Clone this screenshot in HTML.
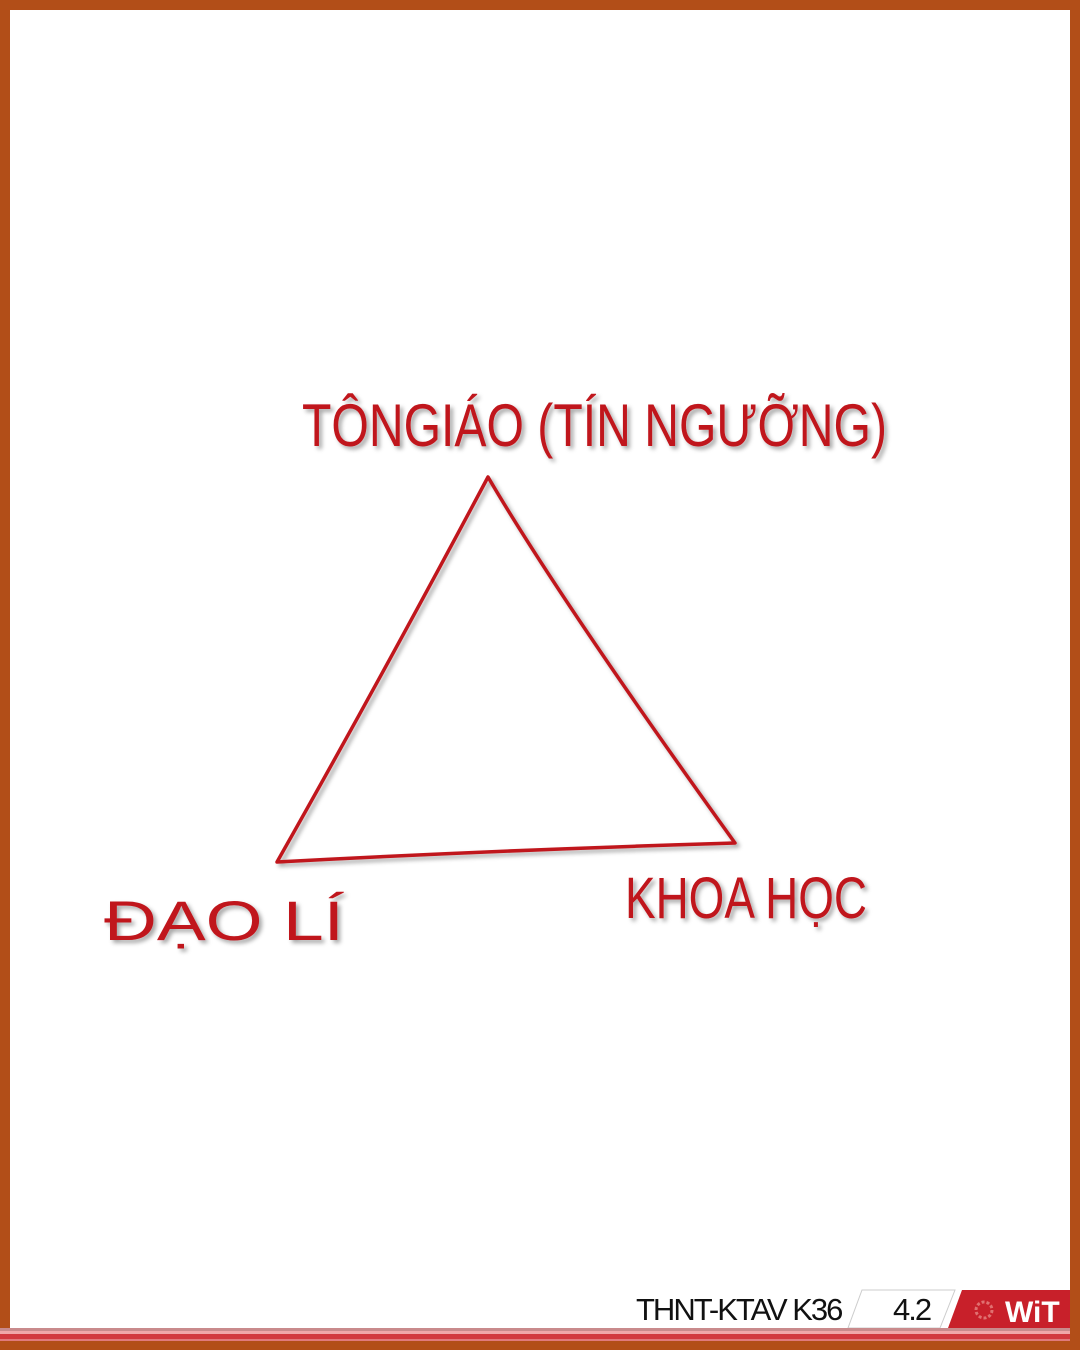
<!DOCTYPE html>
<html><head><meta charset="utf-8"><style>
html,body{margin:0;padding:0}
body{width:1080px;height:1350px;position:relative;background:#b24e18;overflow:hidden;font-family:"Liberation Sans",sans-serif}
.in{position:absolute;left:10px;top:10px;width:1060px;height:1330px;background:#fff}
.l{position:absolute;left:0;width:1070px}
.foot{position:absolute;top:1292px;font-size:31px;color:#111;letter-spacing:-2px}
</style></head><body>
<div class="in"></div>
<svg width="1080" height="1350" style="position:absolute;left:0;top:0">
<defs><filter id="sh"><feDropShadow dx="3" dy="3" stdDeviation="2" flood-color="#000" flood-opacity="0.35"/></filter></defs>
<g filter="url(#sh)" fill="none" stroke="#c0141c" stroke-width="3.5" stroke-linejoin="round">
<path d="M488 477 Q560 600 735 843 Q500 850 277 862 Q380 680 488 477 Z"/>
</g>
<g filter="url(#sh)" fill="#c0141c" font-family="Liberation Sans Narrow, Liberation Sans, sans-serif">
<text x="302" y="446" font-size="60" textLength="585" lengthAdjust="spacingAndGlyphs">TÔNGIÁO (TÍN NGƯỠNG)</text>
<text x="104" y="940" font-size="56" textLength="240" lengthAdjust="spacingAndGlyphs">ĐẠO LÍ</text>
<text x="625" y="918" font-size="58" textLength="242" lengthAdjust="spacingAndGlyphs">KHOA HỌC</text>
</g>
<polygon points="862,1290 955,1290 940,1328 848,1328" fill="#fff" stroke="#ccc" stroke-width="1"/>
<polygon points="962,1290 1070,1290 1070,1328 948,1328" fill="#c8202a"/>
<text x="1005" y="1322" font-size="30" font-weight="bold" fill="#fff" font-family="Liberation Sans, sans-serif">WiT</text>
<circle cx="984" cy="1310" r="8" fill="none" stroke="#e07070" stroke-width="3" stroke-dasharray="3 2"/>
</svg>
<div class="foot" style="left:636px">THNT-KTAV K36</div>
<div class="foot" style="left:893px">4.2</div>
<div class="l" style="top:1328px;height:3px;background:#c98a8c"></div>
<div class="l" style="top:1331px;height:3px;background:#f0a8aa"></div>
<div class="l" style="top:1334px;height:5px;background:#d23a40"></div>
<div class="l" style="top:1339px;height:2px;background:#e07a7c"></div>
</body></html>
